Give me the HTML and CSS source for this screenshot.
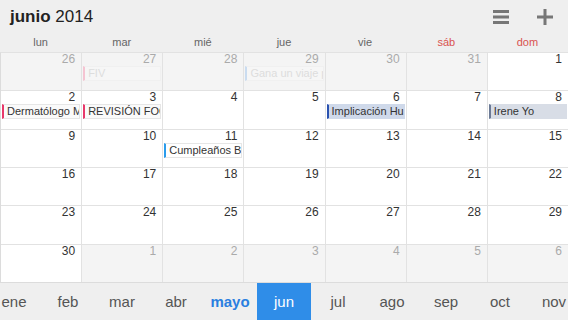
FILE: index.html
```html
<!DOCTYPE html>
<html lang="es">
<head>
    <meta charset="UTF-8">
    <meta name="viewport" content="width=device-width, initial-scale=1.0">
    <title>Calendario</title>
    <link rel="stylesheet" href="styles.css">
</head>
<body>
    <div class="app">
        <header class="top">
            <h1 class="title"><b>junio</b> 2014</h1>
            <div class="actions">
                <svg class="icon" width="16" height="14" viewBox="0 0 16 14">
                    <rect x="0" y="0" width="16" height="3" fill="#777"/>
                    <rect x="0" y="5.5" width="16" height="3" fill="#777"/>
                    <rect x="0" y="11" width="16" height="3" fill="#777"/>
                </svg>
                <svg class="icon" width="16" height="16" viewBox="0 0 16 16">
                    <rect x="6.5" y="0" width="3" height="16" fill="#777"/>
                    <rect x="0" y="6.5" width="16" height="3" fill="#777"/>
                </svg>
            </div>
        </header>

        <div class="weekdays">
            <span>lun</span><span>mar</span><span>mié</span><span>jue</span><span>vie</span>
            <span class="weekend">sáb</span><span class="weekend">dom</span>
        </div>

        <div class="grid">
            <div class="cell other"><span class="num">26</span></div>
            <div class="cell other"><span class="num">27</span><div class="event faded pink">FIV</div></div>
            <div class="cell other"><span class="num">28</span></div>
            <div class="cell other"><span class="num">29</span><div class="event faded blue">Gana un viaje p</div></div>
            <div class="cell other"><span class="num">30</span></div>
            <div class="cell other"><span class="num">31</span></div>
            <div class="cell"><span class="num">1</span></div>

            <div class="cell"><span class="num">2</span><div class="event pink">Dermatólogo M</div></div>
            <div class="cell"><span class="num">3</span><div class="event pink">REVISIÓN FOC</div></div>
            <div class="cell"><span class="num">4</span></div>
            <div class="cell"><span class="num">5</span></div>
            <div class="cell"><span class="num">6</span><div class="event navy">Implicación Hu</div></div>
            <div class="cell"><span class="num">7</span></div>
            <div class="cell"><span class="num">8</span><div class="event slate">Irene Yo</div></div>

            <div class="cell"><span class="num">9</span></div>
            <div class="cell"><span class="num">10</span></div>
            <div class="cell"><span class="num">11</span><div class="event sky">Cumpleaños B</div></div>
            <div class="cell"><span class="num">12</span></div>
            <div class="cell"><span class="num">13</span></div>
            <div class="cell"><span class="num">14</span></div>
            <div class="cell"><span class="num">15</span></div>

            <div class="cell"><span class="num">16</span></div>
            <div class="cell"><span class="num">17</span></div>
            <div class="cell"><span class="num">18</span></div>
            <div class="cell"><span class="num">19</span></div>
            <div class="cell"><span class="num">20</span></div>
            <div class="cell"><span class="num">21</span></div>
            <div class="cell"><span class="num">22</span></div>

            <div class="cell"><span class="num">23</span></div>
            <div class="cell"><span class="num">24</span></div>
            <div class="cell"><span class="num">25</span></div>
            <div class="cell"><span class="num">26</span></div>
            <div class="cell"><span class="num">27</span></div>
            <div class="cell"><span class="num">28</span></div>
            <div class="cell"><span class="num">29</span></div>

            <div class="cell"><span class="num">30</span></div>
            <div class="cell other"><span class="num">1</span></div>
            <div class="cell other"><span class="num">2</span></div>
            <div class="cell other"><span class="num">3</span></div>
            <div class="cell other"><span class="num">4</span></div>
            <div class="cell other"><span class="num">5</span></div>
            <div class="cell other"><span class="num">6</span></div>
        </div>

        <nav class="months">
            <span>ene</span><span>feb</span><span>mar</span><span>abr</span>
            <span class="today">mayo</span>
            <span class="current">jun</span>
            <span>jul</span><span>ago</span><span>sep</span><span>oct</span><span>nov</span>
        </nav>
    </div>
</body>
</html>
```

FILE: styles.css
```css
html, body {
    margin: 0;
    padding: 0;
}
body {
    font-family: "Liberation Sans", Arial, sans-serif;
    background: #efefef;
    color: #333;
    width: 568px;
    height: 320px;
    overflow: hidden;
}
.app {
    display: flex;
    flex-direction: column;
    height: 320px;
}
.top {
    height: 34px;
    display: flex;
    align-items: center;
    justify-content: space-between;
    padding: 0 15px 0 10px;
}
.title {
    margin: 0;
    font-size: 17px;
    font-weight: normal;
    color: #222;
}
.title b {
    font-weight: bold;
}
.actions {
    display: flex;
    align-items: center;
    gap: 28px;
}
.icon {
    display: block;
}
.weekdays {
    height: 18px;
    display: grid;
    grid-template-columns: repeat(7, 1fr);
    font-size: 11px;
    color: #666;
    text-align: center;
    line-height: 16px;
}
.weekdays .weekend {
    color: #d9534f;
}
.grid {
    height: 229px;
    display: grid;
    grid-template-columns: repeat(7, 1fr);
    grid-template-rows: repeat(6, 1fr);
    gap: 1px;
    background: #e2e2e2;
    border-top: 1px solid #e2e2e2;
    border-left: 1px solid #dcdcdc;
    border-bottom: 1px solid #dcdcdc;
}
.cell {
    background: #fff;
    min-width: 0;
    overflow: hidden;
    display: flex;
    flex-direction: column;
}
.cell.other {
    background: #f4f4f4;
}
.num {
    text-align: right;
    font-size: 12px;
    line-height: 13px;
    padding: 0 6px 0 0;
}
.other .num {
    color: #aaa;
}
.event {
    margin: 0 1px;
    height: 13px;
    font-size: 11px;
    line-height: 13px;
    white-space: nowrap;
    overflow: hidden;
    padding-left: 3px;
    border: 1px solid #e6e6e6;
    border-left: 2px solid;
    background: #fafafa;
    color: #333;
}
.event.pink { border-left-color: #e8386a; }
.event.navy { background: #cfd9ea; border-color: #cfd9ea; border-left-color: #2a52b0; }
.event.slate { background: #d8dde6; border-color: #d8dde6; border-left-color: #6b7a96; }
.event.sky { border-left-color: #2a9cec; background: #fff; }
.event.faded {
    color: #ddd;
    background: #f6f6f6;
    border-color: #f0f0f0;
}
.event.faded.pink { border-left-color: #f5c4d2; }
.event.faded.blue { border-left-color: #cadcf0; }
.months {
    flex: 1;
    display: flex;
    margin-left: -13px;
}
.months span {
    flex: 0 0 54px;
    display: flex;
    align-items: center;
    justify-content: center;
    font-size: 15px;
    color: #555;
}
.months .today {
    color: #2a7fe0;
    font-weight: bold;
}
.months .current {
    background: #2f8de8;
    color: #fff;
}
```
